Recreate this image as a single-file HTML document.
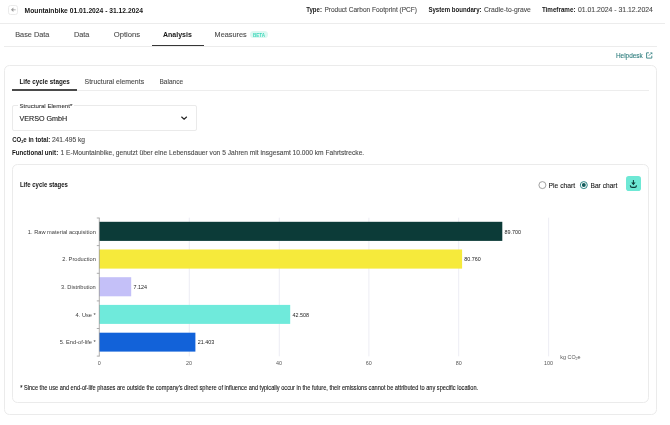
<!DOCTYPE html>
<html><head><meta charset="utf-8">
<style>
html,body{margin:0;padding:0;background:#fff;width:670px;height:425px;overflow:hidden;position:relative;font-family:"Liberation Sans",sans-serif}
.t{position:absolute;white-space:nowrap;filter:grayscale(1);text-rendering:geometricPrecision;font-family:"Liberation Sans",sans-serif}
.t sub{font-size:60%;vertical-align:-0.25em;line-height:0}
.a{position:absolute;box-sizing:border-box}
svg{position:absolute;left:0;top:0;filter:opacity(0.999)}
</style></head><body>
<!-- header -->
<div class="a" style="left:8.1px;top:4.7px;width:10.3px;height:10.2px;border:0.8px solid #ebebeb;border-radius:2.6px"></div>
<div class="a" style="left:0;top:22.8px;width:665px;height:0.8px;background:#ececec"></div>
<!-- tabs -->
<div class="a" style="left:4.2px;top:45.6px;width:652.9px;height:1.1px;background:#ececec"></div>
<div class="a" style="left:151.5px;top:44.8px;width:52.3px;height:1.4px;background:#363636"></div>
<div class="a" style="left:250.3px;top:31px;width:17.8px;height:7.1px;border-radius:3.6px;background:#dcf8f1"></div>
<!-- outer card -->
<div class="a" style="left:4px;top:65.4px;width:653px;height:350px;border:0.8px solid #ebebeb;border-radius:5.5px"></div>
<div class="a" style="left:12px;top:89.8px;width:636.8px;height:1px;background:#ededed"></div>
<div class="a" style="left:12px;top:89.3px;width:65.2px;height:1.5px;background:#4a4a4a"></div>
<!-- select -->
<div class="a" style="left:12px;top:105.3px;width:185px;height:25.4px;border:0.9px solid #eaeaea;border-radius:2px"></div>
<div class="a" style="left:17.8px;top:103px;width:56px;height:4px;background:#fff"></div>
<!-- chart card -->
<div class="a" style="left:12.2px;top:164.4px;width:636.5px;height:239px;border:0.8px solid #ebebeb;border-radius:5.5px"></div>
<!-- download button -->
<div class="a" style="left:625.9px;top:176.2px;width:15px;height:15px;border-radius:2.8px;background:#6ee8d5"></div>

<svg width="670" height="425" viewBox="0 0 670 425">
 <!-- back arrow -->
 <path d="M15.7 9.8 H12.6" fill="none" stroke="#a8a8a8" stroke-width="0.9"/><path d="M10.9 9.8 L13.4 7.5 V12.1 Z" fill="#9c9c9c"/>
 <!-- helpdesk external link icon -->
 <path d="M648.9 52.8 H646.6 V58.1 H651.8 V55.7" fill="none" stroke="#2b7b7c" stroke-width="0.85"/>
 <path d="M648.7 55.8 L651.2 53.3" fill="none" stroke="#2b7b7c" stroke-width="0.8"/><path d="M650.1 52.4 H652.3 V54.6 Z" fill="#2b7b7c"/>
 <!-- chevron -->
 <path d="M181.4 116.8 L184.1 119.1 L186.8 116.8" fill="none" stroke="#222" stroke-width="1.2"/>
 <!-- radios -->
 <circle cx="542.4" cy="185.1" r="3.5" fill="#fff" stroke="#8a8a8a" stroke-width="0.8"/>
 <circle cx="583.8" cy="185.1" r="3.5" fill="#fff" stroke="#2e8585" stroke-width="1"/>
 <circle cx="583.8" cy="185.1" r="2" fill="#135c5c"/>
 <!-- download icon -->
 <path d="M633.4 180 V183.5" fill="none" stroke="#0f3b3a" stroke-width="1"/><path d="M631.2 182.6 H635.6 L633.4 185.2 Z" fill="#0f3b3a"/><path d="M630.3 185.3 Q630.6 187.4 632 187.4 H634.8 Q636.2 187.4 636.5 185.3" fill="none" stroke="#0f3b3a" stroke-width="1.2"/>
 <!-- grid -->
 <g stroke="#ebebf3" stroke-width="0.9">
  <line x1="189.3" y1="217.7" x2="189.3" y2="356.3"/>
  <line x1="279.3" y1="217.7" x2="279.3" y2="356.3"/>
  <line x1="368.9" y1="217.7" x2="368.9" y2="356.3"/>
  <line x1="458.7" y1="217.7" x2="458.7" y2="356.3"/>
  <line x1="548.6" y1="217.7" x2="548.6" y2="356.3"/>
 </g>
 <!-- bars -->
 <rect x="99.2" y="221.8" width="403.1" height="19.1" fill="#0c3b38"/>
 <rect x="99.2" y="249.5" width="362.9" height="19.1" fill="#f6ea3b"/>
 <rect x="99.2" y="277.2" width="32.0" height="19.1" fill="#c4c0f8"/>
 <rect x="99.2" y="304.9" width="191.0" height="19.0" fill="#6feadb"/>
 <rect x="99.2" y="332.7" width="96.2" height="18.9" fill="#1262d9"/>
 <!-- axis -->
 <g stroke="#8c8c8c" stroke-width="0.7" fill="none">
  <line x1="99.3" y1="217.7" x2="99.3" y2="356.5"/>
  <line x1="96.8" y1="218.0" x2="99.3" y2="218.0"/>
  <line x1="96.8" y1="245.6" x2="99.3" y2="245.6"/>
  <line x1="96.8" y1="273.3" x2="99.3" y2="273.3"/>
  <line x1="96.8" y1="300.9" x2="99.3" y2="300.9"/>
  <line x1="96.8" y1="328.5" x2="99.3" y2="328.5"/>
  <line x1="96.8" y1="356.1" x2="99.3" y2="356.1"/>
 </g>
 <g font-family="Liberation Sans" font-size="5.7" fill="#3d3d3d" text-anchor="end">
  <text x="95.8" y="233.7">1. Raw material acquisition</text>
  <text x="95.8" y="261.3">2. Production</text>
  <text x="95.8" y="289.0">3. Distribution</text>
  <text x="95.8" y="316.6">4. Use *</text>
  <text x="95.8" y="344.2">5. End-of-life *</text>
 </g>
 <g font-family="Liberation Sans" font-size="5.4" fill="#222">
  <text x="504.5" y="233.6">89.700</text>
  <text x="464.3" y="261.2">80.760</text>
  <text x="133.6" y="289.0">7.124</text>
  <text x="292.5" y="316.6">42.508</text>
  <text x="197.7" y="344.2">21.403</text>
 </g>
 <g font-family="Liberation Sans" font-size="5.4" fill="#555" text-anchor="middle">
  <text x="99.2" y="364.8">0</text>
  <text x="189.1" y="364.8">20</text>
  <text x="279.0" y="364.8">40</text>
  <text x="368.8" y="364.8">60</text>
  <text x="458.7" y="364.8">80</text>
  <text x="548.6" y="364.8">100</text>
 </g>
 <text x="560.3" y="358.8" font-family="Liberation Sans" font-size="5.4" fill="#555">kg CO<tspan font-size="3.6" dy="1.4">2</tspan><tspan dy="-1.4">e</tspan></text>
<g font-family="Liberation Sans">
<text x="24.6" y="13" font-size="6.9" font-weight="700" fill="#161616" stroke="#161616" stroke-width="0.0" textLength="118.3" lengthAdjust="spacingAndGlyphs">Mountainbike 01.01.2024 - 31.12.2024</text>
<text x="306.3" y="12" font-size="6.9" font-weight="700" fill="#161616" stroke="#161616" stroke-width="0.0" textLength="15.6" lengthAdjust="spacingAndGlyphs">Type:</text>
<text x="324.4" y="12" font-size="6.9" font-weight="400" fill="#4a4a4a" stroke="#4a4a4a" stroke-width="0.1" textLength="92.6" lengthAdjust="spacingAndGlyphs">Product Carbon Footprint (PCF)</text>
<text x="428.4" y="12" font-size="6.9" font-weight="700" fill="#161616" stroke="#161616" stroke-width="0.0" textLength="53.2" lengthAdjust="spacingAndGlyphs">System boundary:</text>
<text x="483.9" y="12" font-size="6.9" font-weight="400" fill="#4a4a4a" stroke="#4a4a4a" stroke-width="0.1" textLength="47.0" lengthAdjust="spacingAndGlyphs">Cradle-to-grave</text>
<text x="541.9" y="12" font-size="6.9" font-weight="700" fill="#161616" stroke="#161616" stroke-width="0.0" textLength="33.6" lengthAdjust="spacingAndGlyphs">Timeframe:</text>
<text x="578.0" y="12" font-size="6.9" font-weight="400" fill="#4a4a4a" stroke="#4a4a4a" stroke-width="0.1" textLength="74.9" lengthAdjust="spacingAndGlyphs">01.01.2024 - 31.12.2024</text>
<text x="15.2" y="37" font-size="7.3" font-weight="400" fill="#4a4a4a" stroke="#4a4a4a" stroke-width="0.1" textLength="34.2" lengthAdjust="spacingAndGlyphs">Base Data</text>
<text x="73.9" y="37" font-size="7.3" font-weight="400" fill="#4a4a4a" stroke="#4a4a4a" stroke-width="0.1" textLength="15.5" lengthAdjust="spacingAndGlyphs">Data</text>
<text x="113.7" y="37" font-size="7.3" font-weight="400" fill="#4a4a4a" stroke="#4a4a4a" stroke-width="0.1" textLength="26.4" lengthAdjust="spacingAndGlyphs">Options</text>
<text x="163.0" y="37" font-size="7.3" font-weight="700" fill="#161616" stroke="#161616" stroke-width="0.0" textLength="28.8" lengthAdjust="spacingAndGlyphs">Analysis</text>
<text x="214.6" y="37" font-size="7.3" font-weight="400" fill="#4a4a4a" stroke="#4a4a4a" stroke-width="0.1" textLength="32.0" lengthAdjust="spacingAndGlyphs">Measures</text>
<text x="253.0" y="37" font-size="5.0" font-weight="700" fill="#3fd8bb" stroke="#3fd8bb" stroke-width="0.0" textLength="12.0" lengthAdjust="spacingAndGlyphs">BETA</text>
<text x="615.9" y="58" font-size="7.0" font-weight="400" fill="#2b7b7c" stroke="#2b7b7c" stroke-width="0.1" textLength="26.9" lengthAdjust="spacingAndGlyphs">Helpdesk</text>
<text x="19.4" y="84" font-size="6.8" font-weight="700" fill="#161616" stroke="#161616" stroke-width="0.0" textLength="50.4" lengthAdjust="spacingAndGlyphs">Life cycle stages</text>
<text x="84.6" y="84" font-size="6.8" font-weight="400" fill="#4a4a4a" stroke="#4a4a4a" stroke-width="0.1" textLength="59.5" lengthAdjust="spacingAndGlyphs">Structural elements</text>
<text x="159.5" y="84" font-size="6.8" font-weight="400" fill="#4a4a4a" stroke="#4a4a4a" stroke-width="0.1" textLength="23.5" lengthAdjust="spacingAndGlyphs">Balance</text>
<text x="19.5" y="108" font-size="6.2" font-weight="400" fill="#393939" stroke="#393939" stroke-width="0.1" textLength="52.8" lengthAdjust="spacingAndGlyphs">Structural Element*</text>
<text x="19.4" y="121" font-size="7.5" font-weight="400" fill="#161616" stroke="#161616" stroke-width="0.1" textLength="47.8" lengthAdjust="spacingAndGlyphs">VERSO GmbH</text>
<text x="12.2" y="142" font-size="6.7" font-weight="700" fill="#161616" stroke="#161616" stroke-width="0.0" textLength="38.0" lengthAdjust="spacingAndGlyphs">CO<tspan font-size="4.2" dy="1.2">2</tspan><tspan dy="-1.2">e in total:</tspan></text>
<text x="51.9" y="142" font-size="6.7" font-weight="400" fill="#4a4a4a" stroke="#4a4a4a" stroke-width="0.1" textLength="33.2" lengthAdjust="spacingAndGlyphs">241.495 kg</text>
<text x="11.9" y="155" font-size="6.8" font-weight="700" fill="#161616" stroke="#161616" stroke-width="0.0" textLength="46.3" lengthAdjust="spacingAndGlyphs">Functional unit:</text>
<text x="60.5" y="155" font-size="6.8" font-weight="400" fill="#4a4a4a" stroke="#4a4a4a" stroke-width="0.1" textLength="303.7" lengthAdjust="spacingAndGlyphs">1 E-Mountainbike, genutzt über eine Lebensdauer von 5 Jahren mit insgesamt 10.000 km Fahrtstrecke.</text>
<text x="19.9" y="187" font-size="6.8" font-weight="700" fill="#161616" stroke="#161616" stroke-width="0.0" textLength="48.0" lengthAdjust="spacingAndGlyphs">Life cycle stages</text>
<text x="548.6" y="188" font-size="7.0" font-weight="400" fill="#161616" stroke="#161616" stroke-width="0.1" textLength="26.6" lengthAdjust="spacingAndGlyphs">Pie chart</text>
<text x="590.5" y="188" font-size="7.0" font-weight="400" fill="#161616" stroke="#161616" stroke-width="0.1" textLength="26.9" lengthAdjust="spacingAndGlyphs">Bar chart</text>
<text x="20.2" y="390" font-size="6.3" font-weight="400" fill="#161616" stroke="#161616" stroke-width="0.1" textLength="458.0" lengthAdjust="spacingAndGlyphs">* Since the use and end-of-life phases are outside the company's direct sphere of influence and typically occur in the future, their emissions cannot be attributed to any specific location.</text>
</g>
</svg>

</body></html>
